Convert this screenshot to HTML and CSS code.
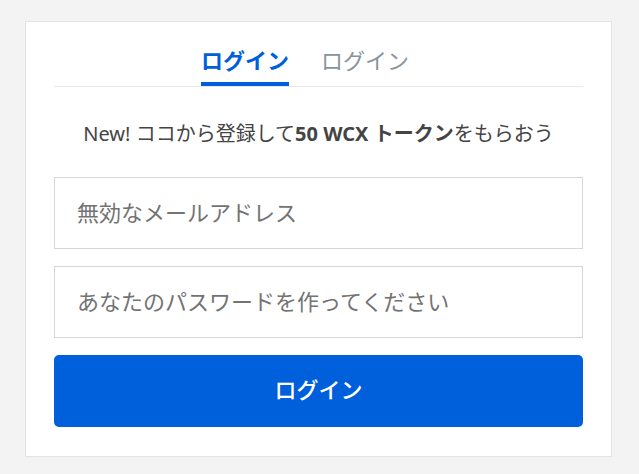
FILE: index.html
```html
<!DOCTYPE html>
<html lang="ja">
<head>
<meta charset="utf-8">
<title>ログイン</title>
<link rel="stylesheet" href="styles.css">
</head>
<body>
<div class="card">
  <div class="tabs">
    <div class="tab tab-active">ログイン</div>
    <div class="tab tab-idle">ログイン</div>
  </div>
  <p class="promo">New! ココから登録して<b>50 WCX トークン</b>をもらおう</p>
  <form class="form">
    <input class="field" type="email" placeholder="無効なメールアドレス">
    <input class="field" type="password" placeholder="あなたのパスワードを作ってください">
    <button class="submit" type="button">ログイン</button>
  </form>
</div>
</body>
</html>
```
FILE: styles.css
```css
html, body {
  margin: 0;
  padding: 0;
  background: #f3f3f3;
}
body {
  padding: 21px 0 0 25px;
  font-family: "Noto Sans", "Noto Sans CJK JP", sans-serif;
}
.card {
  box-sizing: border-box;
  width: 587px;
  background: #fff;
  border: 1px solid #e4e4e4;
  padding: 22px 28px 29px;
}
.tabs {
  display: flex;
  justify-content: center;
  gap: 32px;
  border-bottom: 1px solid #e8e8e8;
}
.tab {
  font-family: "Noto Sans CJK JP", sans-serif;
  font-size: 22px;
  line-height: 30px;
  padding-bottom: 8px;
  border-bottom: 4px solid transparent;
}
.tab-active {
  color: #005fdb;
  font-weight: 700;
  border-bottom-color: #005fdb;
}
.tab-idle {
  color: #89939b;
  margin-right: 27px;
}
.promo {
  margin: 32px 0 28px;
  text-align: center;
  font-size: 20px;
  line-height: 30px;
  color: #444;
}
.promo b {
  font-weight: 700;
}
.form {
  display: flex;
  flex-direction: column;
  gap: 17px;
  margin: 0;
}
.field {
  box-sizing: border-box;
  height: 72px;
  margin: 0;
  border: 1px solid #d6d6d6;
  border-radius: 0;
  padding: 0 22px 5px;
  font-family: "Noto Sans CJK JP", sans-serif;
  font-size: 22px;
  color: #333;
  background: #fff;
  outline: none;
}
.field::placeholder {
  color: #737373;
}
.submit {
  box-sizing: border-box;
  height: 72px;
  margin: 0;
  border: 0;
  border-radius: 5px;
  padding: 0 0 6px;
  background: #005fdb;
  color: #fff;
  font-family: "Noto Sans CJK JP", sans-serif;
  font-size: 22px;
  font-weight: 500;
  cursor: pointer;
}
```
